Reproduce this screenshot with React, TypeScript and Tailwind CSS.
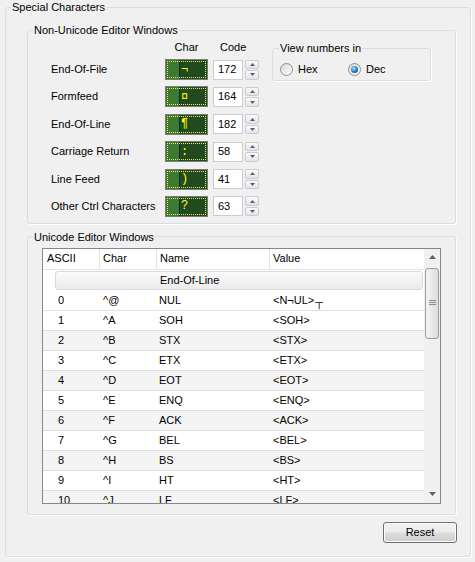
import React from "react";

const nonUni = [
  { label: "End-Of-File", glyph: "¬", code: "172" },
  { label: "Formfeed", glyph: "¤", code: "164" },
  { label: "End-Of-Line", glyph: "¶", code: "182" },
  { label: "Carriage Return", glyph: ":", code: "58" },
  { label: "Line Feed", glyph: ")", code: "41" },
  { label: "Other Ctrl Characters", glyph: "?", code: "63" },
];

const tableRows = [
  ["0", "^@", "NUL", "<N¬UL>"],
  ["1", "^A", "SOH", "<SOH>"],
  ["2", "^B", "STX", "<STX>"],
  ["3", "^C", "ETX", "<ETX>"],
  ["4", "^D", "EOT", "<EOT>"],
  ["5", "^E", "ENQ", "<ENQ>"],
  ["6", "^F", "ACK", "<ACK>"],
  ["7", "^G", "BEL", "<BEL>"],
  ["8", "^H", "BS", "<BS>"],
  ["9", "^I", "HT", "<HT>"],
  ["10", "^J", "LF", "<LF>"],
];

function Swatch({ glyph }: { glyph: string }) {
  return (
    <div className="relative flex h-[21px] w-[43px] border border-[#7b7b7b]">
      <div className="w-[13px] bg-[#3c7a32]" />
      <div className="w-px bg-[#0d2a3a]" />
      <div className="flex flex-1 items-center bg-[#224a21] pl-[1px] font-['Liberation_Mono',monospace] text-[12px] leading-none text-[#ffff00]">
        {glyph}
      </div>
      <div className="pointer-events-none absolute inset-[1px] border border-dotted border-[#e8e85a]" />
    </div>
  );
}

function Spinner() {
  return (
    <div className="ml-[2px] flex h-[20px] w-[14px] flex-col gap-[1px]">
      <div className="flex flex-1 items-center justify-center rounded-[2px] border border-[#cbcbcb] bg-gradient-to-b from-[#fbfbfb] to-[#e4e4e4]">
        <svg width="5" height="3" viewBox="0 0 5 3">
          <path d="M0 3 L2.5 0 L5 3Z" fill="#4e5f88" />
        </svg>
      </div>
      <div className="flex flex-1 items-center justify-center rounded-[2px] border border-[#cbcbcb] bg-gradient-to-b from-[#fbfbfb] to-[#e4e4e4]">
        <svg width="5" height="3" viewBox="0 0 5 3">
          <path d="M0 0 L2.5 3 L5 0Z" fill="#4e5f88" />
        </svg>
      </div>
    </div>
  );
}

function Radio({ checked }: { checked?: boolean }) {
  return (
    <span className="flex h-[13px] w-[13px] items-center justify-center rounded-full border border-[#8c8e90] bg-gradient-to-br from-[#d8d8d8] to-[#fdfdfd]">
      {checked && (
        <span className="h-[7px] w-[7px] rounded-full bg-[radial-gradient(circle_at_40%_35%,#b4e2ff,#1b78c0_55%,#0c4a85)]" />
      )}
    </span>
  );
}

export default function App() {
  return (
    <div className="h-[562px] w-[475px] overflow-hidden bg-[#f0f0f0] font-['Liberation_Sans',Arial,sans-serif] text-[11px] leading-[13px] text-black">
      <fieldset className="ml-[5px] flex w-[466px] flex-col rounded-[3px] border border-[#d5dfe5] pb-[13px] shadow-[1px_1px_0_#fff]">
        <legend className="ml-[5px] px-[1px] leading-[14px]">Special Characters</legend>

        {/* Non-Unicode */}
        <fieldset className="ml-[21px] mt-[9px] w-[429px] rounded-[3px] border border-[#d5dfe5] pb-[6px] shadow-[1px_1px_0_#fff]">
          <legend className="ml-[5px] px-[1px] leading-[14px]">Non-Unicode Editor Windows</legend>
          <div className="mt-[4px] flex items-start pl-[23px]">
            <div className="flex flex-col">
              <div className="flex h-[13px] items-center">
                <div className="w-[114px]" />
                <div className="w-[43px] text-center">Char</div>
                <div className="ml-[12px]">Code</div>
              </div>
              <div className="mt-[5px] flex flex-col gap-[6.4px]">
                {nonUni.map((r) => (
                  <div key={r.label} className="flex h-[21px] items-center">
                    <div className="w-[114px]">{r.label}</div>
                    <Swatch glyph={r.glyph} />
                    <div className="ml-[5px] flex h-[20px] w-[30px] items-center border border-[#c9ccd0] bg-white pl-[4px]">
                      {r.code}
                    </div>
                    <Spinner />
                  </div>
                ))}
              </div>
            </div>
            <fieldset className="ml-[13px] w-[159px] rounded-[3px] border border-[#d5dfe5] pb-[4px] shadow-[1px_1px_0_#fff]">
              <legend className="ml-[6px] px-[1px] leading-[14px]">View numbers in</legend>
              <div className="mt-[8px] flex items-center pl-[7px]">
                <label className="flex w-[68px] items-center gap-[5px]">
                  <Radio />
                  <span>Hex</span>
                </label>
                <label className="flex items-center gap-[5px]">
                  <Radio checked />
                  <span>Dec</span>
                </label>
              </div>
            </fieldset>
          </div>
        </fieldset>

        {/* Unicode */}
        <fieldset className="ml-[21px] mt-[6px] w-[429px] rounded-[3px] border border-[#d5dfe5] pb-[10px] shadow-[1px_1px_0_#fff]">
          <legend className="ml-[5px] px-[1px] leading-[14px]">Unicode Editor Windows</legend>
          <div className="ml-[14px] mt-[4px] flex h-[256px] w-[399px] overflow-hidden border border-[#828790] bg-white">
            <div className="flex flex-1 flex-col overflow-hidden">
              <div className="flex h-[21px] shrink-0 items-center border-b border-[#e3e3e3]">
                <div className="flex h-full w-[57px] items-center border-r border-[#e3e3e3] pl-[4px]">ASCII</div>
                <div className="flex h-full w-[57px] items-center border-r border-[#e3e3e3] pl-[3px]">Char</div>
                <div className="flex h-full w-[113px] items-center border-r border-[#e3e3e3] pl-[3px]">Name</div>
                <div className="flex h-full flex-1 items-center pl-[3px]">Value</div>
              </div>
              <div className="flex h-[21px] shrink-0 py-[1px] pl-[12px] pr-[1px]">
                <div className="flex flex-1 items-center rounded-[3px] border border-[#d9d9d9] bg-gradient-to-b from-[#fafafa] to-[#ebebeb] pl-[104px]">
                  End-Of-Line
                </div>
              </div>
              {tableRows.map((r, i) => (
                <div
                  key={r[0]}
                  className={`flex h-[20px] shrink-0 items-center border-b border-[#dedede] ${
                    i % 2 === 0 && i > 0 ? "bg-[#f4f4f4]" : "bg-white"
                  }`}
                >
                  <div className="w-[57px] pl-[15px]">{r[0]}</div>
                  <div className="w-[57px] pl-[3px]">{r[1]}</div>
                  <div className="w-[113px] pl-[2px]">{r[2]}</div>
                  <div className="flex-1 pl-[3px]">
                    {r[3]}
                    {i === 0 && <span className="relative top-[2px] ml-[1px]">┬</span>}
                  </div>
                </div>
              ))}
            </div>
            <div className="flex w-[16px] flex-col bg-[#f0f0f0]">
              <div className="flex h-[17px] items-center justify-center">
                <svg width="7" height="4" viewBox="0 0 7 4">
                  <path d="M0 4 L3.5 0 L7 4Z" fill="#606060" />
                </svg>
              </div>
              <div className="mx-[1px] mt-[2px] flex h-[71px] items-center justify-center rounded-[3px] border border-[#9c9c9c] bg-gradient-to-r from-[#f4f4f4] to-[#dcdcdc]">
                <svg width="7" height="6" viewBox="0 0 7 6">
                  <path d="M0 0.5H7M0 2.5H7M0 4.5H7" stroke="#8a8a8a" strokeWidth="1" />
                </svg>
              </div>
              <div className="flex-1" />
              <div className="flex h-[17px] items-center justify-center">
                <svg width="7" height="4" viewBox="0 0 7 4">
                  <path d="M0 0 L3.5 4 L7 0Z" fill="#606060" />
                </svg>
              </div>
            </div>
          </div>
        </fieldset>

        <button className="mr-[13px] mt-[7px] h-[21px] w-[74px] self-end rounded-[3px] border border-[#707070] bg-[linear-gradient(#f2f2f2,#ebebeb_48%,#dddddd_52%,#cfcfcf)] text-[11px] shadow-[inset_0_0_0_1px_#fcfcfc]">
          Reset
        </button>
      </fieldset>
    </div>
  );
}
